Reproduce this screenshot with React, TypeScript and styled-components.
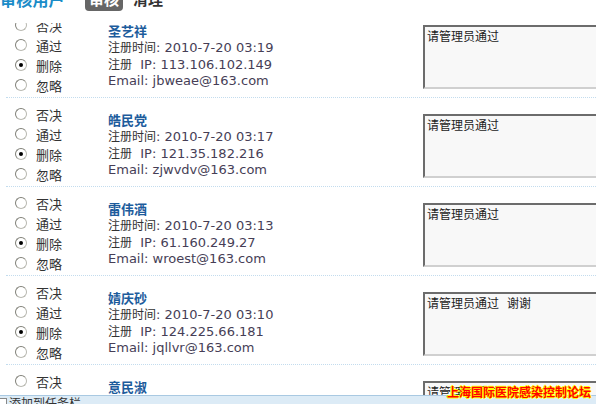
import styled, { createGlobalStyle } from 'styled-components';

const GlobalStyle = createGlobalStyle`
  html, body {
    margin: 0;
    padding: 0;
    background: #ffffff;
    overflow: hidden;
  }
  body {
    width: 596px;
    height: 404px;
    font-family: 'DejaVu Sans', 'Noto Sans CJK SC', sans-serif;
    color: #3a3a3a;
  }
`;

const Page = styled.div`
  position: relative;
  width: 596px;
  height: 404px;
  overflow: hidden;
`;

const Header = styled.div`
  position: absolute;
  top: 0;
  left: 0;
  right: 0;
  z-index: 2;
  height: 23px;
  display: flex;
  align-items: flex-start;
  background: #ffffff;
  font-family: 'Noto Sans CJK SC', sans-serif;
  font-weight: 700;
`;

const HeaderTitle = styled.div`
  width: 85px;
  margin-top: -10px;
  color: #1a8cc8;
  font-size: 16px;
  line-height: 19px;
  letter-spacing: 0.2px;
`;

const Tab = styled.div<{ $active?: boolean }>`
  margin-top: -10px;
  padding: 0 ${(p) => (p.$active ? '4px' : '0')};
  margin-right: 10px;
  height: 21px;
  border-radius: 0 0 4px 4px;
  background: ${(p) => (p.$active ? '#666666' : 'transparent')};
  color: ${(p) => (p.$active ? '#ffffff' : '#333333')};
  font-size: 15px;
  line-height: 18px;
`;

const List = styled.div`
  display: flex;
  flex-direction: column;
  padding-top: 9px;
`;

const Row = styled.div`
  display: flex;
  align-items: flex-start;
  margin-left: 6px;
  padding: 6px 0 2px;
  border-bottom: 1px dotted #c3dcee;
  overflow: hidden;
`;

const Choices = styled.div`
  display: flex;
  flex-direction: column;
  flex-shrink: 0;
  width: 102px;
  padding-left: 9px;
  box-sizing: border-box;
`;

const Choice = styled.label`
  display: flex;
  align-items: center;
  height: 20px;
  font-family: 'Noto Sans CJK SC', sans-serif;
  font-size: 13px;
  color: #333333;
`;

const Radio = styled.span<{ $checked?: boolean }>`
  position: relative;
  width: 10px;
  height: 10px;
  margin-right: 9px;
  border-radius: 50%;
  border: 1px solid #b8b8b0;
  border-top-color: #808078;
  border-left-color: #808078;
  background: #ffffff;

  &::after {
    content: '';
    display: ${(p) => (p.$checked ? 'block' : 'none')};
    position: absolute;
    left: 3px;
    top: 3px;
    width: 4px;
    height: 4px;
    border-radius: 50%;
    background: #000000;
  }
`;

const Info = styled.div`
  display: flex;
  flex-direction: column;
  flex-shrink: 0;
  width: 315px;
  padding-top: 8px;
  font-size: 13px;
  line-height: 16px;
  color: #463e56;
  white-space: nowrap;
`;

const Name = styled.div`
  font-family: 'Noto Sans CJK SC', sans-serif;
  font-size: 13px;
  font-weight: 700;
  color: #1d5c9c;
`;

const Label = styled.span`
  font-family: 'Noto Sans CJK SC', sans-serif;
  font-size: 12px;
  color: #333333;
`;

const Note = styled.div`
  margin-top: 10px;
  width: 220px;
  height: 58px;
  flex-shrink: 0;
  padding: 1px 2px;
  border: 2px solid #d0d0d0;
  border-top-color: #6c6c6c;
  border-left-color: #6c6c6c;
  background: #f8f8f8;
  font-family: 'Noto Sans CJK SC', sans-serif;
  font-size: 12px;
  line-height: 15px;
  color: #222222;
  white-space: pre;
`;

const TaskBar = styled.div`
  position: absolute;
  left: 0;
  right: 0;
  bottom: 0;
  height: 8px;
  display: flex;
  align-items: flex-start;
  gap: 2px;
  background: #dcebf6;
  border-top: 1px solid #a9c9e2;
  overflow: hidden;
  font-family: 'Noto Sans CJK SC', sans-serif;
  font-size: 12px;
  line-height: 14px;
  color: #333333;
`;

const Check = styled.span`
  width: 6px;
  height: 8px;
  margin-top: 2px;
  border: 1px solid #888888;
  border-left: none;
  background: #ffffff;
`;

const Watermark = styled.div`
  position: absolute;
  right: 5px;
  bottom: 4px;
  z-index: 3;
  font-family: 'Noto Sans CJK SC', sans-serif;
  font-size: 12px;
  line-height: 16px;
  font-weight: 700;
  color: #ff0000;
  text-shadow: 1px 0 0 #ffff00, -1px 0 0 #ffff00, 0 1px 0 #ffff00, 0 -1px 0 #ffff00;
`;

type User = {
  name: string;
  time: string;
  ip: string;
  email: string;
  note: string;
};

const users: User[] = [
  { name: '圣艺祥', time: '2010-7-20 03:19', ip: '113.106.102.149', email: 'jbweae@163.com', note: '请管理员通过' },
  { name: '皓民党', time: '2010-7-20 03:17', ip: '121.35.182.216', email: 'zjwvdv@163.com', note: '请管理员通过' },
  { name: '雷伟酒', time: '2010-7-20 03:13', ip: '61.160.249.27', email: 'wroest@163.com', note: '请管理员通过' },
  { name: '婧庆砂', time: '2010-7-20 03:10', ip: '124.225.66.181', email: 'jqllvr@163.com', note: '请管理员通过   谢谢' },
  { name: '意民淑', time: '2010-7-20 03:08', ip: '58.62.110.35', email: 'yimsu@163.com', note: '请管理员通过' },
];

const options = ['否决', '通过', '删除', '忽略'];

const App = () => {
  return (
    <>
      <GlobalStyle />
      <Page>
        <Header>
          <HeaderTitle>审核用户</HeaderTitle>
          <Tab $active>审核</Tab>
          <Tab>清理</Tab>
        </Header>
        <List>
          {users.map((u) => (
            <Row key={u.name}>
              <Choices>
                {options.map((o) => (
                  <Choice key={o}>
                    <Radio $checked={o === '删除'} />
                    {o}
                  </Choice>
                ))}
              </Choices>
              <Info>
                <Name>{u.name}</Name>
                <div>
                  <Label>注册时间</Label>: {u.time}
                </div>
                <div>
                  <Label>注册</Label>&nbsp; IP: {u.ip}
                </div>
                <div>Email: {u.email}</div>
              </Info>
              <Note>{u.note}</Note>
            </Row>
          ))}
        </List>
        <Watermark>上海国际医院感染控制论坛</Watermark>
        <TaskBar>
          <Check />
          添加到任务栏
        </TaskBar>
      </Page>
    </>
  );
};

export default App;
